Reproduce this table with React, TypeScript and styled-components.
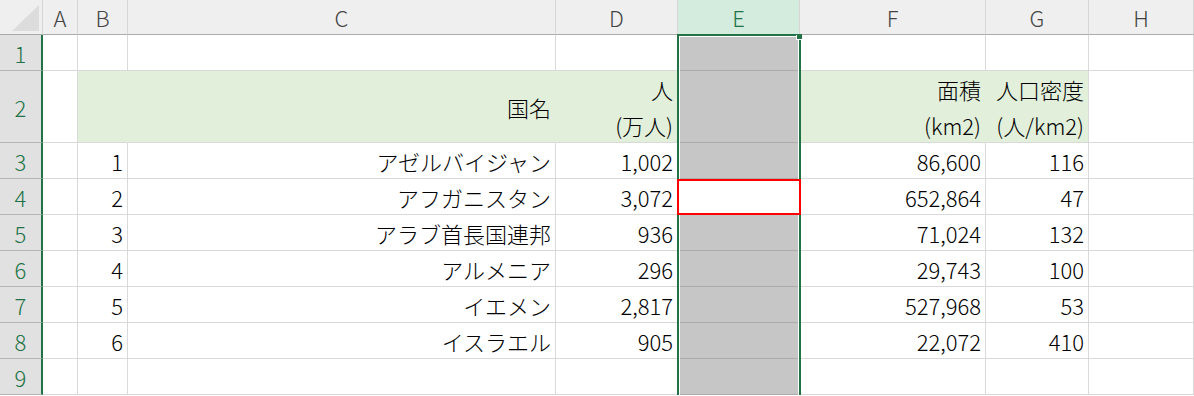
import React from "react";
import styled, { createGlobalStyle, css } from "styled-components";

const GREEN = "#217346";
const GRID = "#d9d9d9";
const HEAD_LINE = "#ababab";
const FILL = "#e2efda";
const SELECT = "#c6c6c6";

const GlobalStyle = createGlobalStyle`
  html, body {
    margin: 0;
    padding: 0;
    overflow: hidden;
    background: #ffffff;
  }
  body {
    font-family: "Noto Sans CJK JP", "Noto Sans", sans-serif;
    font-weight: 300;
  }
`;

const columns = [
  { key: "A", width: 35 },
  { key: "B", width: 50 },
  { key: "C", width: 428 },
  { key: "D", width: 122 },
  { key: "E", width: 122 },
  { key: "F", width: 186 },
  { key: "G", width: 103 },
  { key: "H", width: 105 },
];

const rows = [
  { no: "1", name: "アゼルバイジャン", people: "1,002", area: "86,600", density: "116" },
  { no: "2", name: "アフガニスタン", people: "3,072", area: "652,864", density: "47" },
  { no: "3", name: "アラブ首長国連邦", people: "936", area: "71,024", density: "132" },
  { no: "4", name: "アルメニア", people: "296", area: "29,743", density: "100" },
  { no: "5", name: "イエメン", people: "2,817", area: "527,968", density: "53" },
  { no: "6", name: "イスラエル", people: "905", area: "22,072", density: "410" },
];

const Sheet = styled.div`
  position: relative;
  display: grid;
  grid-template-columns: 43px ${columns.map((c) => `${c.width}px`).join(" ")};
  grid-template-rows: 35px 36px 72px repeat(7, 36px);
  width: 1194px;
  font-size: 22px;
  color: #000;
`;

const Corner = styled.div`
  position: relative;
  background: #efefef;
  border-right: 1px solid #d6d6d6;
  border-bottom: 1px solid ${HEAD_LINE};

  &::after {
    content: "";
    position: absolute;
    left: 12px;
    top: 5px;
    width: 27px;
    height: 26px;
    background: #dcdcdc;
    clip-path: polygon(100% 0, 100% 100%, 0 100%);
  }
`;

const ColHeader = styled.div<{ $active?: boolean }>`
  display: flex;
  align-items: center;
  justify-content: center;
  box-sizing: border-box;
  background: ${(p) => (p.$active ? "#d3ecdd" : "#efefef")};
  color: ${(p) => (p.$active ? GREEN : "#444444")};
  border-right: 1px solid #d6d6d6;
  border-bottom: 1px solid ${HEAD_LINE};
  line-height: 34px;
`;

const RowHeader = styled.div`
  display: flex;
  align-items: center;
  justify-content: center;
  box-sizing: border-box;
  background: #e1e1e1;
  color: ${GREEN};
  border-right: 2px solid ${GREEN};
  border-bottom: 1px solid #b4b4b4;
  line-height: 36px;
`;

const Cell = styled.div<{ $fill?: boolean; $selected?: boolean; $marked?: boolean }>`
  position: relative;
  display: flex;
  align-items: center;
  justify-content: flex-end;
  box-sizing: border-box;
  padding: 0 4px 0 0;
  white-space: nowrap;
  line-height: 36px;
  background: #ffffff;
  border-right: 1px solid ${GRID};
  border-bottom: 1px solid ${GRID};

  ${(p) =>
    p.$fill &&
    css`
      background: ${FILL};
      border-right-color: ${FILL};
    `}

  ${(p) =>
    p.$selected &&
    css`
      background: ${SELECT};
      border-right-color: ${SELECT};
      border-bottom-color: ${HEAD_LINE};
    `}

  ${(p) =>
    p.$marked &&
    css`
      background: #ffffff;
      &::after {
        content: "";
        position: absolute;
        left: -1px;
        right: -2px;
        top: 0;
        bottom: -1px;
        border: 2px solid #ff0000;
        z-index: 3;
      }
    `}
`;

const Lines = styled.div`
  text-align: right;
  line-height: 36px;
`;

const SelectionFrame = styled.div`
  position: absolute;
  left: 677px;
  top: 34px;
  width: 124px;
  bottom: -10px;
  box-sizing: border-box;
  border: 2px solid ${GREEN};
  box-shadow: inset 0 0 0 1px #ffffff;
  pointer-events: none;
  z-index: 2;
`;

const FillHandle = styled.div`
  position: absolute;
  right: -3px;
  top: -2px;
  width: 5px;
  height: 5px;
  background: ${GREEN};
  box-shadow: -1px 1px 0 #ffffff;
`;

type RowData = (typeof rows)[number];

const DataRow = ({ row, index }: { row: RowData; index: number }) => (
  <>
    <RowHeader>{index + 3}</RowHeader>
    <Cell />
    <Cell>{row.no}</Cell>
    <Cell>{row.name}</Cell>
    <Cell>{row.people}</Cell>
    <Cell $selected={index !== 1} $marked={index === 1} />
    <Cell>{row.area}</Cell>
    <Cell>{row.density}</Cell>
    <Cell />
  </>
);

const EmptyRow = ({ n }: { n: number }) => (
  <>
    <RowHeader>{n}</RowHeader>
    <Cell />
    <Cell />
    <Cell />
    <Cell />
    <Cell $selected />
    <Cell />
    <Cell />
    <Cell />
  </>
);

export default function App() {
  return (
    <>
      <GlobalStyle />
      <Sheet>
        <Corner />
        {columns.map((c) => (
          <ColHeader key={c.key} $active={c.key === "E"}>
            {c.key}
          </ColHeader>
        ))}

        <EmptyRow n={1} />

        <RowHeader>2</RowHeader>
        <Cell />
        <Cell $fill />
        <Cell $fill>国名</Cell>
        <Cell $fill>
          <Lines>
            <div>人</div>
            <div>(万人)</div>
          </Lines>
        </Cell>
        <Cell $selected />
        <Cell $fill>
          <Lines>
            <div>面積</div>
            <div>(km2)</div>
          </Lines>
        </Cell>
        <Cell $fill style={{ borderRightColor: GRID }}>
          <Lines>
            <div>人口密度</div>
            <div>(人/km2)</div>
          </Lines>
        </Cell>
        <Cell />

        {rows.map((r, i) => (
          <DataRow key={r.no} row={r} index={i} />
        ))}

        <EmptyRow n={9} />

        <SelectionFrame>
          <FillHandle />
        </SelectionFrame>
      </Sheet>
    </>
  );
}
